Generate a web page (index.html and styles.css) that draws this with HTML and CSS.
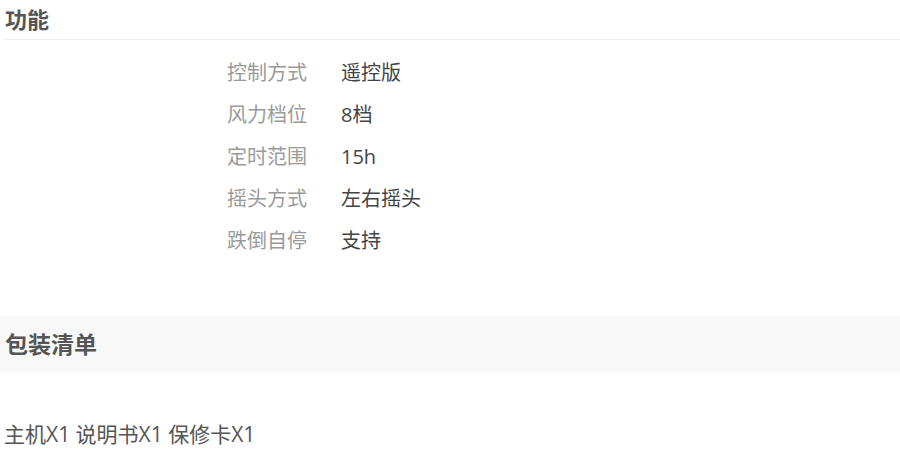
FILE: index.html
```html
<!DOCTYPE html>
<html lang="zh-CN">
<head>
  <meta charset="UTF-8">
  <title>商品参数</title>
  <link rel="stylesheet" href="styles.css">
</head>
<body>
  <section class="spec">
    <h2 class="spec-title">功能</h2>
    <dl class="spec-list">
      <div class="spec-row"><dt>控制方式</dt><dd>遥控版</dd></div>
      <div class="spec-row"><dt>风力档位</dt><dd>8档</dd></div>
      <div class="spec-row"><dt>定时范围</dt><dd>15h</dd></div>
      <div class="spec-row"><dt>摇头方式</dt><dd>左右摇头</dd></div>
      <div class="spec-row"><dt>跌倒自停</dt><dd>支持</dd></div>
    </dl>
  </section>

  <section class="package">
    <h2 class="package-title">包装清单</h2>
    <p class="package-text">主机X1 说明书X1 保修卡X1</p>
  </section>
</body>
</html>
```

FILE: styles.css
```css
body { margin: 0; padding: 0; font-family: "Open Sans", "Noto Sans CJK SC", sans-serif; color: #333; background: #fff; }

.spec { padding-left: 4px; }
.spec-title { margin: 0; padding: 4px 0 0 1px; height: 35px; line-height: 30px; font-size: 22px; font-weight: bold; color: #555; border-bottom: 1px solid #eee; }
.spec-list { margin: 12px 0 0; padding: 0 0 0 223px; }
.spec-row { display: flex; height: 42px; line-height: 42px; font-size: 20px; }
.spec-row dt { width: 114px; color: #9a9a9a; }
.spec-row dd { margin: 0; color: #444; }

.package { margin-top: 54px; }
.package-title { margin: 0; padding-left: 5px; height: 57px; line-height: 57px; font-size: 23px; font-weight: bold; color: #555; background: #f8f8f8; }
.package-text { margin: 40px 0 0; padding-left: 4px; line-height: 42px; font-size: 21px; color: #555; }
```
